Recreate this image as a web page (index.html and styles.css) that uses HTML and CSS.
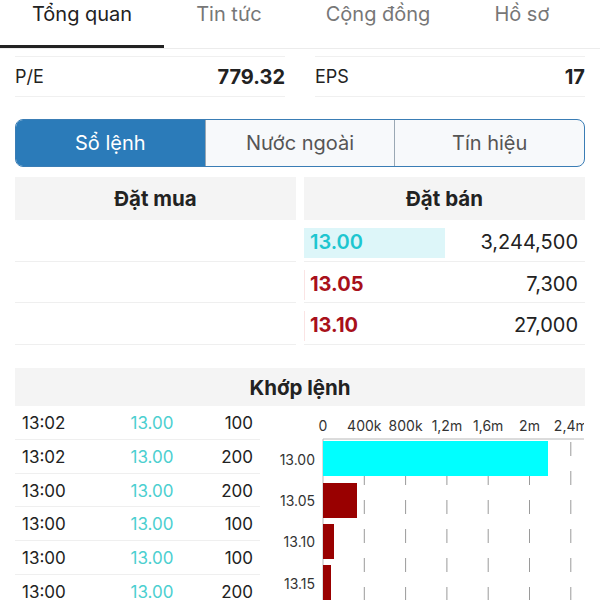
FILE: index.html
```html
<!DOCTYPE html>
<html>
<head>
    <title>Tổng quan</title>
    <link rel="stylesheet" href="styles.css">
</head>
<body>
    <div class="tabs">
        <div class="tab active">Tổng quan</div>
        <div class="tab">Tin tức</div>
        <div class="tab">Cộng đồng</div>
        <div class="tab">Hồ sơ</div>
    </div>

    <div class="stats">
        <div class="stat"><span>P/E</span><b>779.32</b></div>
        <div class="stat"><span>EPS</span><b>17</b></div>
    </div>

    <div class="segment">
        <div class="seg active">Sổ lệnh</div>
        <div class="seg">Nước ngoài</div>
        <div class="seg">Tín hiệu</div>
    </div>

    <div class="book">
        <div class="book-col">
            <div class="book-head">Đặt mua</div>
            <div class="book-row"></div>
            <div class="book-row"></div>
            <div class="book-row"></div>
        </div>
        <div class="book-col">
            <div class="book-head">Đặt bán</div>
            <div class="book-row">
                <div class="bar bar-ref" style="width: 50%"></div>
                <span class="price ref">13.00</span>
                <span class="vol">3,244,500</span>
            </div>
            <div class="book-row">
                <div class="bar bar-down" style="width: 0.4%"></div>
                <span class="price down">13.05</span>
                <span class="vol">7,300</span>
            </div>
            <div class="book-row">
                <div class="bar bar-down" style="width: 0.4%"></div>
                <span class="price down">13.10</span>
                <span class="vol">27,000</span>
            </div>
        </div>
    </div>

    <div class="match-head">Khớp lệnh</div>

    <div class="match">
        <div class="trades">
            <div class="trade"><span class="t">13:02</span><span class="p">13.00</span><span class="v">100</span></div>
            <div class="trade"><span class="t">13:02</span><span class="p">13.00</span><span class="v">200</span></div>
            <div class="trade"><span class="t">13:00</span><span class="p">13.00</span><span class="v">200</span></div>
            <div class="trade"><span class="t">13:00</span><span class="p">13.00</span><span class="v">100</span></div>
            <div class="trade"><span class="t">13:00</span><span class="p">13.00</span><span class="v">100</span></div>
            <div class="trade"><span class="t">13:00</span><span class="p">13.00</span><span class="v">200</span></div>
        </div>

        <svg class="chart" width="324" height="200" viewBox="0 0 324 200">
            <g class="axis-labels" text-anchor="middle">
                <text x="63" y="25">0</text>
                <text x="104.3" y="25">400k</text>
                <text x="145.6" y="25">800k</text>
                <text x="186.9" y="25">1,2m</text>
                <text x="228.2" y="25">1,6m</text>
                <text x="269.5" y="25">2m</text>
                <text x="310.8" y="25">2,4m</text>
            </g>
            <g class="grid">
                <line x1="104.3" y1="31" x2="104.3" y2="200" />
                <line x1="145.6" y1="31" x2="145.6" y2="200" />
                <line x1="186.9" y1="31" x2="186.9" y2="200" />
                <line x1="228.2" y1="31" x2="228.2" y2="200" />
                <line x1="269.5" y1="31" x2="269.5" y2="200" />
                <line x1="310.8" y1="31" x2="310.8" y2="200" />
            </g>
            <line class="axis" x1="63" y1="33" x2="324" y2="33" />
            <line class="axis" x1="63" y1="33" x2="63" y2="200" />
            <rect x="63" y="35" width="225" height="35" fill="#00ffff" />
            <rect x="63" y="77" width="34" height="35" fill="#990000" />
            <rect x="63" y="118" width="11" height="35" fill="#990000" />
            <rect x="63" y="159" width="8" height="35" fill="#990000" />
            <g class="price-labels" text-anchor="end">
                <text x="55" y="59">13.00</text>
                <text x="55" y="100">13.05</text>
                <text x="55" y="141">13.10</text>
                <text x="55" y="183">13.15</text>
            </g>
        </svg>
    </div>
</body>
</html>
```

FILE: styles.css
```css
html, body { margin: 0; height: 600px; overflow: hidden; background: #fff; }
body { font-family: Inter, "Noto Sans", sans-serif; color: #222; }

.tabs { display: flex; height: 48px; border-bottom: 1px solid #ececec; }
.tab { box-sizing: border-box; height: 48px; padding: 0 32px; line-height: 28px; font-size: 20px; color: #777; border-bottom: 3px solid transparent; }
.tab.active { color: #222; border-bottom-color: #222; }

.stats { display: flex; gap: 30px; padding: 0 15px; margin-top: 7px; }
.stat { flex: 1; display: flex; justify-content: space-between; align-items: center; height: 41px; box-sizing: border-box; border-top: 1px solid #f0f0f0; border-bottom: 1px solid #f0f0f0; font-size: 18px; }
.stat b { font-size: 20px; font-weight: 700; }

.segment { display: flex; margin: 22px 15px 0; height: 48px; box-sizing: border-box; border: 1px solid #3a7db5; border-radius: 8px; overflow: hidden; background: #f7f9fb; }
.seg { flex: 1; display: flex; align-items: center; justify-content: center; font-size: 20px; color: #555; border-left: 1px solid #9aa8b4; }
.seg:first-child { border-left: none; }
.seg.active { background: #2b7bb9; color: #fff; }

.book { display: flex; gap: 8px; padding: 0 15px; margin-top: 10px; }
.book-col { flex: 1; }
.book-head { height: 43px; background: #f4f4f4; display: flex; align-items: center; justify-content: center; font-size: 20.5px; font-weight: 700; }
.book-row { position: relative; height: 41.7px; box-sizing: border-box; border-bottom: 1px solid #efefef; display: flex; align-items: center; justify-content: space-between; padding: 3px 7px 0 6px; font-size: 20px; }
.bar { position: absolute; left: 0; top: 8px; height: 30px; }
.bar-ref { background: #ddf6f9; }
.bar-down { background: #fae4e4; }
.price { position: relative; font-weight: 600; }
.price.ref { color: #1ec6d0; }
.price.down { color: #a8101a; font-weight: 700; }
.vol { position: relative; color: #222; }

.match-head { margin: 23px 15px 0; height: 38px; background: #f4f4f4; display: flex; align-items: center; justify-content: center; font-size: 20.5px; font-weight: 700; }

.match { display: flex; padding-left: 15px; }
.trades { width: 245px; flex: none; }
.trade { height: 33.8px; box-sizing: border-box; border-bottom: 1px solid #efefef; display: flex; align-items: center; padding: 1px 7px 0; font-size: 17px; }
.trade .t { width: 90px; }
.trade .p { width: 80px; text-align: center; color: #4ccfd0; }
.trade .v { flex: 1; text-align: right; }

.chart { display: block; flex: none; }
.chart text { font-family: Inter, "Noto Sans", sans-serif; font-size: 14px; fill: #333; }
.grid line { stroke: #9a9a9a; stroke-width: 1; stroke-dasharray: 14 15; stroke-dashoffset: -5; }
.axis { stroke: #b8b8b8; stroke-width: 1; }
```
